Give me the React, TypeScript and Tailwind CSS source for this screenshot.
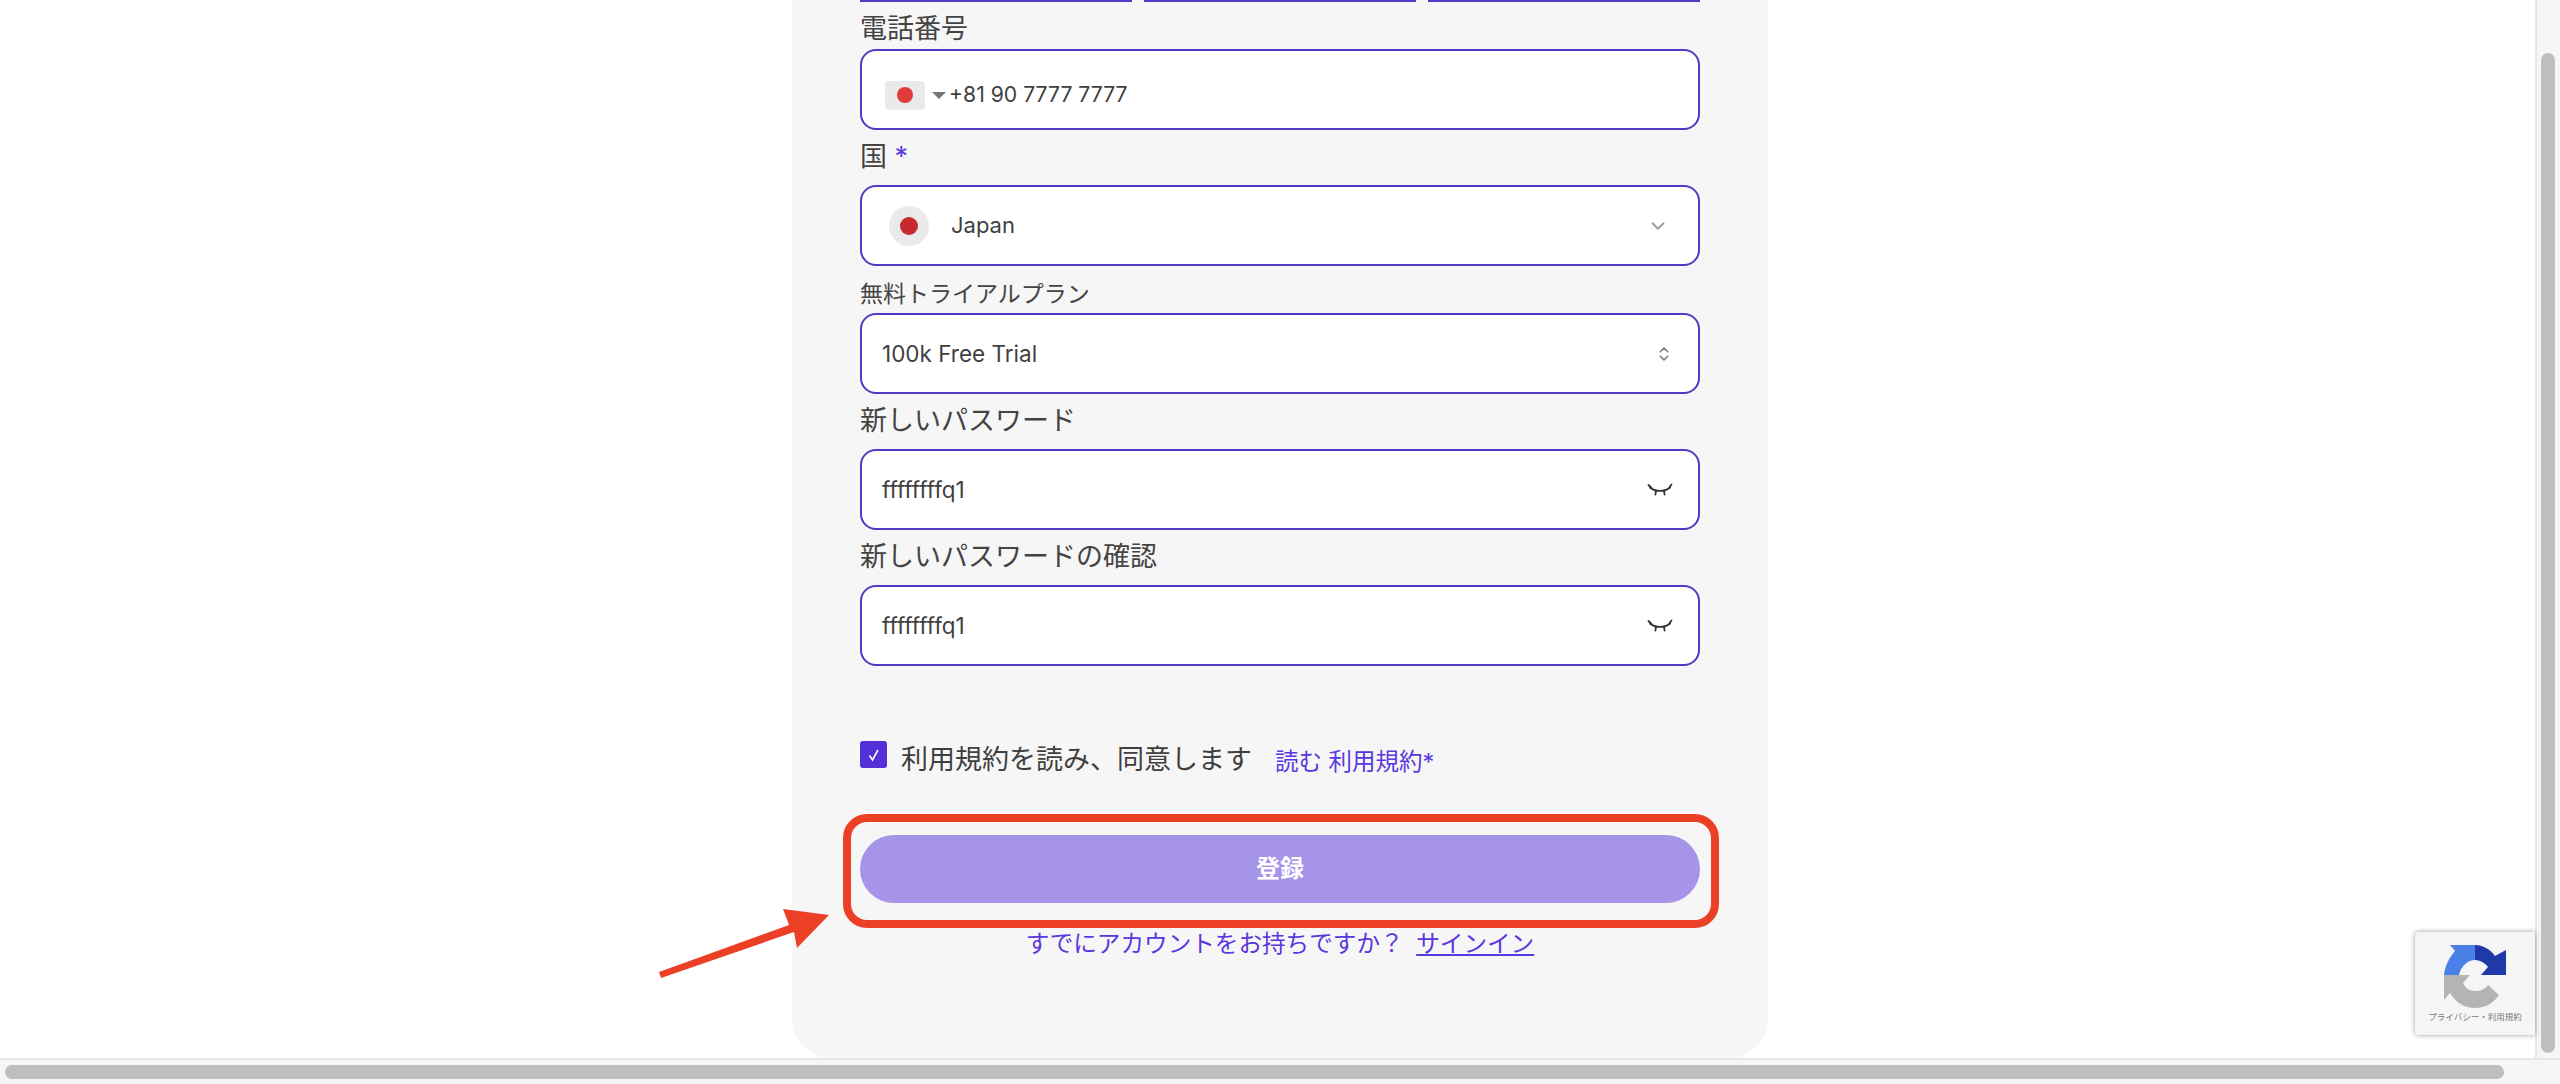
import { ChevronDown, ChevronsUpDown } from "lucide-react";
import type { ReactNode } from "react";

const font = "font-['Inter','Noto_Sans_CJK_JP',sans-serif]";

function EyeClosed() {
  return (
    <svg width="26" height="13" viewBox="0 0 26 13" fill="none" stroke="#333" strokeWidth="1.8" strokeLinecap="round">
      <path d="M3 4.5C8 9 18 9 23 4.5" />
      <path d="M1.5 2l3 3M24.5 1.5l-2.5 3.5M9 8l-.6 3.5M17 8l.6 3.5" />
    </svg>
  );
}

function RecaptchaLogo() {
  return (
    <svg width="64" height="66" viewBox="0 0 64 66">
      <path d="M32 2C40 2 47 6 52 13L63 7V32H38L45 24C42 20 37 17 32 17Z" fill="#1f39a8" />
      <path d="M7 2H32V17C25 17 18 23 16 32H1C2 23 6 15 12 8Z" fill="#4a80e8" />
      <path d="M1 32H27L20 40C23 46 27 48 32 48C38 48 42 46 45 42L56 52C50 61 41 65 32 65C22 65 13 60 7 50L1 57Z" fill="#b4b4b4" />
    </svg>
  );
}

function Field({ label, labelClass, children, boxClass }: { label: ReactNode; labelClass: string; children: ReactNode; boxClass?: string }) {
  return (
    <>
      <div className={labelClass}>{label}</div>
      <div className={`h-[81px] w-full rounded-2xl border-2 border-[#5239c6] bg-white flex items-center text-[#3f3f3f] text-[22.5px] ${boxClass ?? ""}`}>
        {children}
      </div>
    </>
  );
}

export default function App() {
  return (
    <div className={`relative w-[2560px] h-[1084px] overflow-hidden bg-white flex flex-col ${font}`}>
      <div className="flex h-[1058px]">
        <main className="w-[2535px] pl-[792px]">
          <div className="w-[976px] h-[1058px] bg-[#f6f6f6] rounded-b-[40px] px-[68px]">
            <div className="grid grid-cols-3 gap-3 h-[2px] overflow-hidden items-end">
              <div className="h-5 rounded-b-2xl border-2 border-[#5239c6] bg-white" />
              <div className="h-5 rounded-b-2xl border-2 border-[#5239c6] bg-white" />
              <div className="h-5 rounded-b-2xl border-2 border-[#5239c6] bg-white" />
            </div>

            <Field label="電話番号" labelClass="h-[47px] pt-[9px] text-[27px] leading-[36px] text-[#444]" boxClass="pl-[23px] pt-[11px]">
              <div className="w-10 h-[29px] rounded bg-[#eaeaea] flex items-center justify-center">
                <div className="w-4 h-4 rounded-full bg-[#e03a3a]" />
              </div>
              <div className="ml-[7px] mr-[3px] w-0 h-0 border-x-[7px] border-x-transparent border-t-[7px] border-t-[#777]" />
              <span className="text-[21.2px]">+81 90 7777 7777</span>
            </Field>

            <Field
              label={<>国 <span className="text-[#5a37e0]">*</span></>}
              labelClass="h-[55px] pt-[9px] text-[27px] leading-[36px] text-[#444]"
              boxClass="pl-[27px] pr-[29px]"
            >
              <div className="w-10 h-10 rounded-full bg-[#eaeaea] flex items-center justify-center">
                <div className="w-[18px] h-[18px] rounded-full bg-[#c62a2f]" />
              </div>
              <span className="ml-[22px] text-[22px]">Japan</span>
              <ChevronDown className="ml-auto text-[#999]" size={22} strokeWidth={2} />
            </Field>

            <Field label="無料トライアルプラン" labelClass="h-[47px] pt-[10px] text-[23px] leading-[36px] text-[#444]" boxClass="pl-[20px] pr-[25px]">
              <span>100k Free Trial</span>
              <ChevronsUpDown className="ml-auto text-[#777]" size={18} strokeWidth={2} />
            </Field>

            <Field label="新しいパスワード" labelClass="h-[55px] pt-[9px] text-[27px] leading-[36px] text-[#444]" boxClass="pl-[20px] pr-[25px]">
              <span>ffffffffq1</span>
              <span className="ml-auto"><EyeClosed /></span>
            </Field>

            <Field label="新しいパスワードの確認" labelClass="h-[55px] pt-[9px] text-[27px] leading-[36px] text-[#444]" boxClass="pl-[20px] pr-[25px]">
              <span>ffffffffq1</span>
              <span className="ml-auto"><EyeClosed /></span>
            </Field>

            <div className="mt-[75px] flex items-start h-[94px]">
              <div className="w-[27px] h-[27px] rounded-[3px] bg-[#5430d8] flex items-center justify-center">
                <svg width="14" height="14" viewBox="0 0 14 14" fill="none" stroke="#fff" strokeWidth="1.6">
                  <path d="M2.5 7.5L5.5 12L11 2" />
                </svg>
              </div>
              <span className="ml-[14px] text-[27px] leading-[38px] text-[#3f3f3f]">利用規約を読み、同意します</span>
              <span className="ml-[23px] mt-[3px] text-[23.5px] leading-[36px] text-[#5a37e0]">読む 利用規約*</span>
            </div>

            <button className="w-full h-[68px] rounded-full bg-[#a594e8] text-white text-[24px] font-bold">登録</button>

            <p className="mt-[23px] text-center text-[23.6px] leading-[36px] text-[#5a37e0]">
              すでにアカウントをお持ちですか？ <a className="ml-[6px] underline">サインイン</a>
            </p>
          </div>
        </main>
        <div className="flex-1 border-l-2 border-[#e8e5e5] bg-[#f8f5f5] pl-[4px] pt-[53px]">
          <div className="w-[14px] h-[1000px] rounded-full bg-[#bebebe]" />
        </div>
      </div>
      <div className="h-[26px] border-t-2 border-[#e8e5e5] bg-[#f8f5f5] pl-[5px] pt-[5px]">
        <div className="w-[2499px] h-[14px] rounded-full bg-[#bebebe]" />
      </div>

      {/* highlight over the button */}
      <div className="absolute left-[843px] top-[814px] w-[876px] h-[114px] rounded-[24px] border-[8px] border-[#ec4026]" />
      <svg className="absolute left-[650px] top-[900px]" width="190" height="90" viewBox="650 900 190 90">
        <path d="M659 972L789 925L783 909L829 915L797 948L794 932L661 978Z" fill="#ec4026" />
      </svg>

      <div className="absolute left-[2415px] top-[932px] w-[120px] h-[103px] bg-[#f5f5f5] rounded-l-[3px] shadow-[0_0_5px_#999] flex flex-col items-center pt-[11px]">
        <RecaptchaLogo />
        <span className="mt-[1px] text-[8.5px] leading-[14px] text-[#777] whitespace-nowrap">プライバシー・利用規約</span>
      </div>
    </div>
  );
}
